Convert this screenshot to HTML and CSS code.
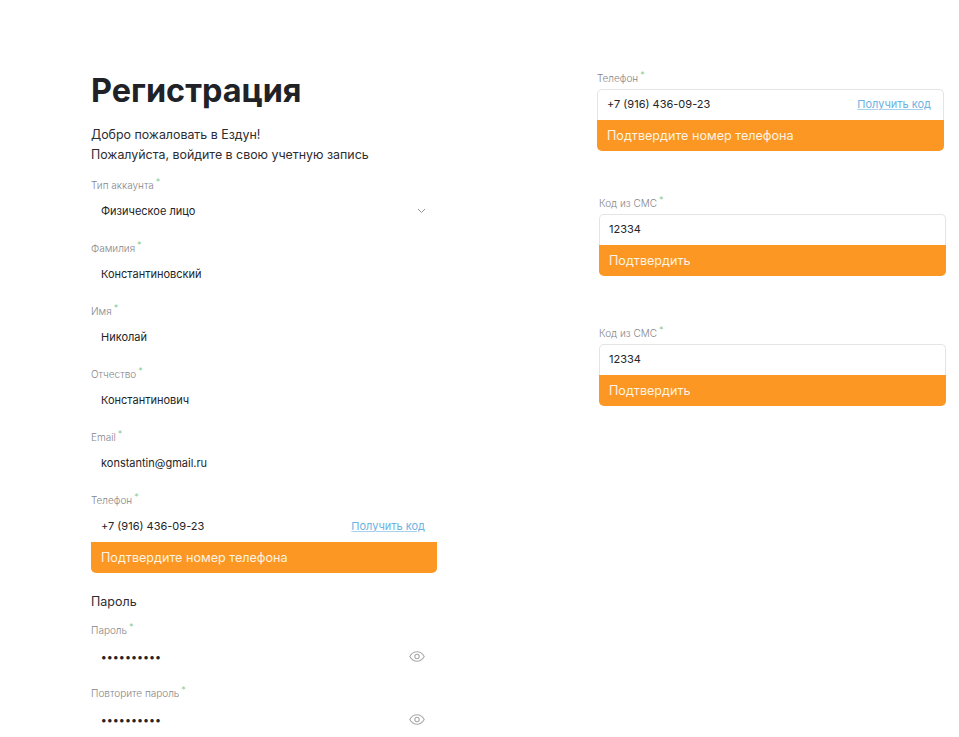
FILE: index.html
```html
<!DOCTYPE html>
<html lang="ru">
<head>
  <meta charset="UTF-8" />
  <meta name="viewport" content="width=device-width, initial-scale=1.0"/>
  <title>Регистрация</title>
  <link rel="stylesheet" href="styles.css">
</head>
<body>
  <div class="page">
    <div class="register">
      <h1>Регистрация</h1>
      <p class="intro">Добро пожаловать в Ездун!<br>Пожалуйста, войдите в свою учетную запись</p>

      <div class="fields">
        <div class="field">
          <div class="label">Тип аккаунта<span class="star">*</span></div>
          <div class="row">
            <span>Физическое лицо</span>
            <svg class="chevron" width="9" height="6" viewBox="0 0 9 6"><path d="M1 1l3.500 3.500L8 1" fill="none" stroke="#8f8f94" stroke-width="1"/></svg>
          </div>
        </div>
        <div class="field">
          <div class="label">Фамилия<span class="star">*</span></div>
          <div class="row"><span>Константиновский</span></div>
        </div>
        <div class="field">
          <div class="label">Имя<span class="star">*</span></div>
          <div class="row"><span>Николай</span></div>
        </div>
        <div class="field">
          <div class="label">Отчество<span class="star">*</span></div>
          <div class="row"><span>Константинович</span></div>
        </div>
        <div class="field">
          <div class="label">Email<span class="star">*</span></div>
          <div class="row"><span>konstantin@gmail.ru</span></div>
        </div>
        <div class="field">
          <div class="label">Телефон<span class="star">*</span></div>
          <div class="row">
            <span>+7 (916) 436-09-23</span>
            <a class="code-link" href="#">Получить код</a>
          </div>
          <button class="action">Подтвердите номер телефона</button>
        </div>
      </div>

      <h2>Пароль</h2>

      <div class="fields password-fields">
        <div class="field">
          <div class="label">Пароль<span class="star">*</span></div>
          <div class="row">
            <span class="dots">••••••••••</span>
            <svg class="eye" width="16" height="11" viewBox="0 0 16 11"><path d="M.8 5.500C2.600 2.400 5 .8 8 .8s5.400 1.600 7.200 4.700C13.400 8.600 11 10.200 8 10.200S2.600 8.600.8 5.500z" fill="none" stroke="#a9a9ad" stroke-width="1.100"/><circle cx="8" cy="5.500" r="2.200" fill="none" stroke="#a9a9ad" stroke-width="1.100"/></svg>
          </div>
        </div>
        <div class="field">
          <div class="label">Повторите пароль<span class="star">*</span></div>
          <div class="row">
            <span class="dots">••••••••••</span>
            <svg class="eye" width="16" height="11" viewBox="0 0 16 11"><path d="M.8 5.500C2.600 2.400 5 .8 8 .8s5.400 1.600 7.200 4.700C13.400 8.600 11 10.200 8 10.200S2.600 8.600.8 5.500z" fill="none" stroke="#a9a9ad" stroke-width="1.100"/><circle cx="8" cy="5.500" r="2.200" fill="none" stroke="#a9a9ad" stroke-width="1.100"/></svg>
          </div>
        </div>
      </div>
    </div>

    <div class="states">
      <div class="field phone-state">
        <div class="label">Телефон<span class="star">*</span></div>
        <div class="row boxed">
          <span>+7 (916) 436-09-23</span>
          <a class="code-link" href="#">Получить код</a>
        </div>
        <button class="action">Подтвердите номер телефона</button>
      </div>

      <div class="field sms-state">
        <div class="label">Код из СМС<span class="star">*</span></div>
        <div class="row boxed"><span>12334</span></div>
        <button class="action">Подтвердить</button>
      </div>

      <div class="field sms-state last">
        <div class="label">Код из СМС<span class="star">*</span></div>
        <div class="row boxed"><span>12334</span></div>
        <button class="action">Подтвердить</button>
      </div>
    </div>
  </div>
</body>
</html>
```

FILE: styles.css
```css
* {
  box-sizing: border-box;
}
body {
  margin: 0;
  background: #fff;
  font-family: Inter, "Noto Sans", Arial, sans-serif;
  color: #26272b;
  overflow: hidden;
}
.page {
  display: flex;
  gap: 160px;
  padding-left: 91px;
  height: 737px;
  overflow: hidden;
}
.register {
  width: 346px;
  padding-top: 71px;
}
h1 {
  margin: 0;
  font-size: 32.400px;
  line-height: 40px;
  font-weight: 700;
  color: #212227;
}
.intro {
  margin: 14px 0 12px;
  font-size: 12.400px;
  line-height: 20px;
  color: #2c2d31;
}
h2 {
  margin: 20px 0 11px;
  font-size: 12.500px;
  line-height: 18px;
  font-weight: 400;
  color: #2c2d31;
}
.fields {
  display: flex;
  flex-direction: column;
  gap: 13px;
}
.password-fields {
  gap: 12px;
}
.password-fields .label {
  margin-bottom: 4px;
}
.label {
  margin-bottom: 3px;
  font-size: 10px;
  font-weight: 300;
  line-height: 16px;
  color: #85858a;
}
.star {
  color: #7fc98a;
  font-size: 9px;
  line-height: 0;
  margin-left: 2px;
  position: relative;
  top: -4px;
}
.row {
  display: flex;
  align-items: center;
  justify-content: space-between;
  height: 31px;
  padding: 0 12px 2px 10px;
  font-size: 11px;
  color: #232428;
}
.boxed {
  border: 1px solid #e4e4e7;
  border-bottom: 0;
  border-radius: 5px 5px 0 0;
  padding-left: 9px;
}
.chevron {
  margin-right: -1px;
}
.code-link {
  color: #6cb2e2;
  font-size: 11px;
  text-decoration: underline;
  text-decoration-thickness: 1px;
  text-decoration-color: #a9d2ee;
  text-underline-offset: 1px;
}
.dots {
  font-size: 11px;
  font-weight: 600;
  letter-spacing: 0.500px;
}
.action {
  display: block;
  width: 100%;
  height: 31px;
  padding: 0 10px;
  border: none;
  border-radius: 0 0 5px 5px;
  background: #fb9722;
  color: #fdf3e3;
  font-family: inherit;
  font-size: 12.600px;
  text-align: left;
}

.states {
  width: 349px;
  padding-top: 70px;
}
.states .action {
  padding-bottom: 1px;
}
.phone-state {
  width: 347px;
}
.sms-state {
  width: 347px;
  margin-left: 2px;
  margin-top: 44px;
}
.sms-state.last {
  margin-top: 49px;
}
```
